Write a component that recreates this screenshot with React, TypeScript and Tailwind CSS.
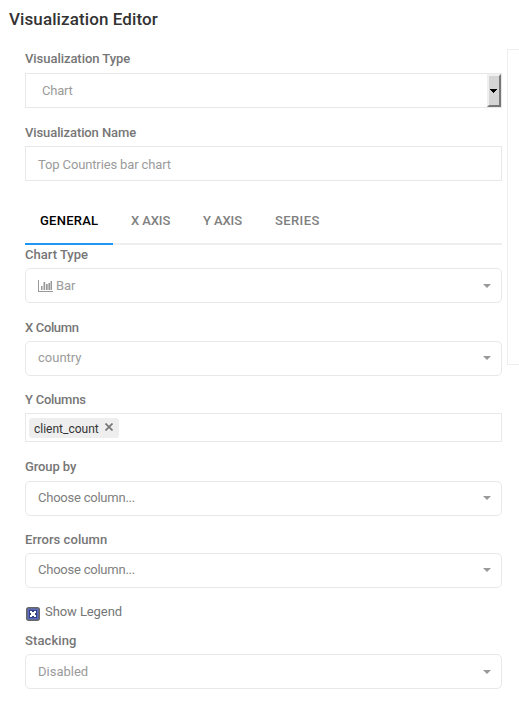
import React from 'react';

function Label({ children, className = '' }: { children: React.ReactNode; className?: string }) {
  return <div className={`mb-[5px] h-[18px] whitespace-nowrap text-[13px] font-medium text-[#767676] ${className || 'leading-[20px]'}`}>{children}</div>;
}

function Select({ children, className = 'text-[#9b9b9b]' }: { children: React.ReactNode; className?: string }) {
  return (
    <div className={`flex h-[35px] items-center justify-between rounded-[5px] border border-[#e8e8e8] pr-[10px] pl-3 text-[13px] leading-[18px] ${className}`}>
      <span className="flex items-center">{children}</span>
      <svg width="8" height="4" viewBox="0 0 8 4" className="fill-[#999]">
        <path d="M0 0h8L4 4z" />
      </svg>
    </div>
  );
}

function BarChartIcon() {
  return (
    <svg width="15" height="12" viewBox="0 0 15 12" className="mr-[3px] fill-[#999]">
      <path d="M0 0h1v11h14v1H0zM3 6h1.500v4H3zM5.500 2h1.700v8H5.500zM8 4h1.700v6H8zM10.400 3h1.600v7h-1.600zM12.500 1H14v9h-1.500z" />
    </svg>
  );
}

const tabs = [
  { name: 'GENERAL', style: 'w-[88px] border-[#2196f3] pl-[15px] text-black tracking-[0.25px]' },
  { name: 'X AXIS', style: 'w-[75px] border-[#eee] pl-[18px] text-[#808080] tracking-[-0.1px]' },
  { name: 'Y AXIS', style: 'w-[72px] border-[#eee] pl-[15px] text-[#808080] tracking-[-0.1px]' },
  { name: 'SERIES', style: 'flex-1 border-[#eee] pl-[15px] text-[#808080] tracking-[0.4px]' },
];

export default function App() {
  return (
    <div className="h-[713px] w-[519px] overflow-hidden bg-white font-['Roboto',sans-serif]">
      <h1 className="h-[49px] pt-2 pl-[9px] text-[17px] leading-[22px] font-medium tracking-[0.1px] text-[#333]">Visualization Editor</h1>
      <div className="flex items-start">
        <main className="ml-[25px] w-[477px] shrink-0 pt-px">
          <section>
            <Label className="leading-[18px] tracking-[-0.05px]">Visualization Type</Label>
            <div className="flex h-[35px] items-stretch justify-between border border-[#e8e8e8] text-[13px] text-[#9b9b9b]">
              <span className="self-center pl-4 leading-[18px] tracking-[-0.2px]">Chart</span>
              <span className="flex w-[14px] items-center border-2 border-t-[#f0f0f0] border-r-[#777] border-b-[#777] border-l-[#f0f0f0] bg-[#d5d5d5] pl-px">
                <svg width="7" height="4" viewBox="0 0 7 4" className="fill-black" shapeRendering="crispEdges">
                  <path d="M0 0h7v1H6v1H5v1H4v1H3V3H2V2H1V1H0z" />
                </svg>
              </span>
            </div>
          </section>
          <section className="mt-[15px]">
            <Label className="leading-[20px] tracking-[-0.1px]">Visualization Name</Label>
            <div className="flex h-[35px] items-center border border-[#e8e8e8] pt-[2px] pl-3 text-[13px] tracking-[-0.13px] text-[#9b9b9b]">Top Countries bar chart</div>
          </section>
          <nav className="mt-[15px] flex h-[49px] text-[13px] font-medium">
            {tabs.map((t) => (
              <div key={t.name} className={`flex items-center border-b-2 pt-[2px] whitespace-nowrap ${t.style}`}>{t.name}</div>
            ))}
          </nav>
          <section>
            <Label>Chart Type</Label>
            <Select className="tracking-[-0.1px] text-[#9b9b9b]"><BarChartIcon />Bar</Select>
          </section>
          <section className="mt-[15px]">
            <Label className="leading-[20px] tracking-[-0.35px]">X Column</Label>
            <Select className="pb-[2px] text-[#9b9b9b]">country</Select>
          </section>
          <section className="mt-[14px]">
            <Label className="leading-[20px] tracking-[-0.25px]">Y Columns</Label>
            <div className="h-[29px] border border-[#e8e8e8] pt-1 pl-[3px]">
              <div className="flex h-5 w-[90px] items-center rounded-[3px] bg-[#eee] pl-[5px] text-[12px] text-[#333]">
                <span className="pt-[2px] leading-5">client_count</span>
                <svg width="8" height="8" viewBox="0 0 8 8" className="mb-[2px] ml-[6px] stroke-[#777]" strokeWidth="1.7">
                  <path d="M.5.5l7 7M7.500.5l-7 7" />
                </svg>
              </div>
            </div>
          </section>
          <section className="mt-4">
            <Label className="leading-[18px] tracking-[-0.1px]">Group by</Label>
            <Select className="pb-[2px] tracking-[-0.23px] text-[#808080]">Choose column...</Select>
          </section>
          <section className="mt-[14px]">
            <Label className="leading-[20px] tracking-[0.05px]">Errors column</Label>
            <Select className="pb-[2px] tracking-[-0.23px] text-[#808080]">Choose column...</Select>
          </section>
          <div className="mt-[14px] flex h-[20px] items-start pl-px text-[13px] text-[#767676]">
            <svg width="14" height="14" viewBox="0 0 14 14" className="mt-[5px] mr-[5px]">
              <rect x=".75" y=".75" width="12.500" height="12.500" rx="2" fill="#5c6bc0" stroke="#666" strokeWidth="1.500" />
              <path d="M3 3h8v8H3z" fill="#34437f" />
              <path d="M4 4h2v1h2V4h2v2H9v2h1v2H8V9H6v1H4V8h1V6H4z" fill="#fff" shapeRendering="crispEdges" />
            </svg>
            <span className="leading-[20px] tracking-[-0.08px]">Show Legend</span>
          </div>
          <section className="mt-[9px]">
            <Label className="leading-[20px] tracking-[0.1px]">Stacking</Label>
            <Select>Disabled</Select>
          </section>
        </main>
        <aside className="ml-[5px] h-[316px] w-3 shrink-0 border-y border-l border-[#eee]" />
      </div>
    </div>
  );
}
